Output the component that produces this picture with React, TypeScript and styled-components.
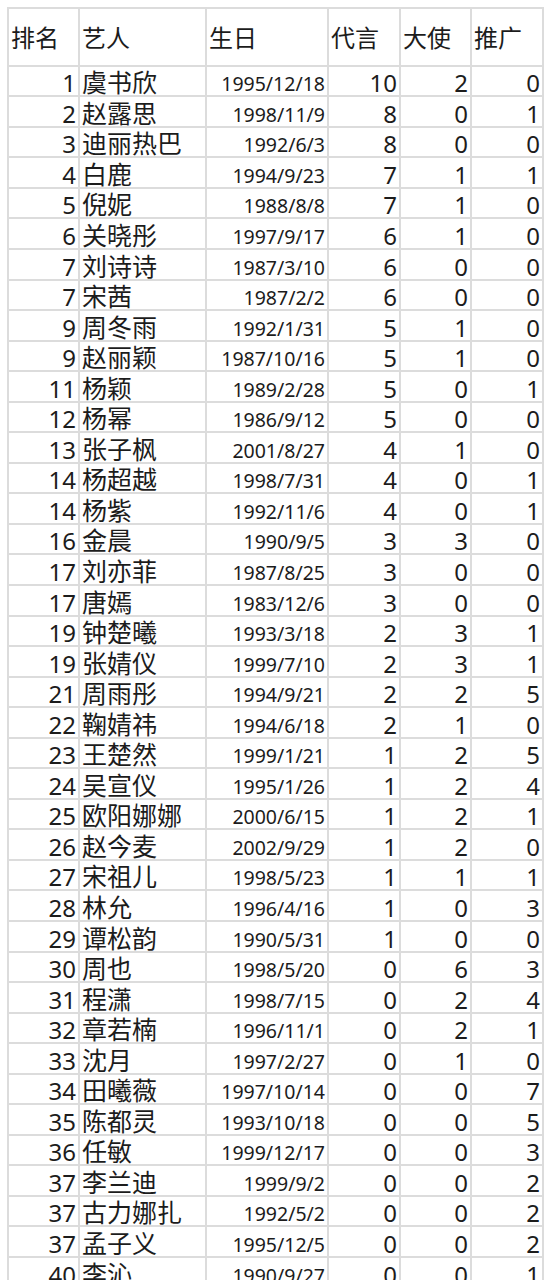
import styled, { createGlobalStyle } from 'styled-components';

type Row = [string, string, string, number, number, number];

const rows: Row[] = [
  ['1', '虞书欣', '1995/12/18', 10, 2, 0],
  ['2', '赵露思', '1998/11/9', 8, 0, 1],
  ['3', '迪丽热巴', '1992/6/3', 8, 0, 0],
  ['4', '白鹿', '1994/9/23', 7, 1, 1],
  ['5', '倪妮', '1988/8/8', 7, 1, 0],
  ['6', '关晓彤', '1997/9/17', 6, 1, 0],
  ['7', '刘诗诗', '1987/3/10', 6, 0, 0],
  ['7', '宋茜', '1987/2/2', 6, 0, 0],
  ['9', '周冬雨', '1992/1/31', 5, 1, 0],
  ['9', '赵丽颖', '1987/10/16', 5, 1, 0],
  ['11', '杨颖', '1989/2/28', 5, 0, 1],
  ['12', '杨幂', '1986/9/12', 5, 0, 0],
  ['13', '张子枫', '2001/8/27', 4, 1, 0],
  ['14', '杨超越', '1998/7/31', 4, 0, 1],
  ['14', '杨紫', '1992/11/6', 4, 0, 1],
  ['16', '金晨', '1990/9/5', 3, 3, 0],
  ['17', '刘亦菲', '1987/8/25', 3, 0, 0],
  ['17', '唐嫣', '1983/12/6', 3, 0, 0],
  ['19', '钟楚曦', '1993/3/18', 2, 3, 1],
  ['19', '张婧仪', '1999/7/10', 2, 3, 1],
  ['21', '周雨彤', '1994/9/21', 2, 2, 5],
  ['22', '鞠婧祎', '1994/6/18', 2, 1, 0],
  ['23', '王楚然', '1999/1/21', 1, 2, 5],
  ['24', '吴宣仪', '1995/1/26', 1, 2, 4],
  ['25', '欧阳娜娜', '2000/6/15', 1, 2, 1],
  ['26', '赵今麦', '2002/9/29', 1, 2, 0],
  ['27', '宋祖儿', '1998/5/23', 1, 1, 1],
  ['28', '林允', '1996/4/16', 1, 0, 3],
  ['29', '谭松韵', '1990/5/31', 1, 0, 0],
  ['30', '周也', '1998/5/20', 0, 6, 3],
  ['31', '程潇', '1998/7/15', 0, 2, 4],
  ['32', '章若楠', '1996/11/1', 0, 2, 1],
  ['33', '沈月', '1997/2/27', 0, 1, 0],
  ['34', '田曦薇', '1997/10/14', 0, 0, 7],
  ['35', '陈都灵', '1993/10/18', 0, 0, 5],
  ['36', '任敏', '1999/12/17', 0, 0, 3],
  ['37', '李兰迪', '1999/9/2', 0, 0, 2],
  ['37', '古力娜扎', '1992/5/2', 0, 0, 2],
  ['37', '孟子义', '1995/12/5', 0, 0, 2],
  ['40', '李沁', '1990/9/27', 0, 0, 1],
];

const headers = ['排名', '艺人', '生日', '代言', '大使', '推广'];

const GlobalStyle = createGlobalStyle`
  html, body {
    margin: 0;
    padding: 0;
    background: #ffffff;
  }
  body {
    font-family: "Noto Sans", "Noto Sans CJK SC", sans-serif;
    color: #1c1c1c;
    height: 1280px;
    overflow: hidden;
  }
`;

const Page = styled.div`
  padding: 7px 0 0 7px;
`;

const Sheet = styled.div`
  display: grid;
  grid-template-columns: 71px 127px 122px 72px 71px 72px;
  grid-template-rows: 57.7px;
  grid-auto-rows: 30.55px;
  width: max-content;
  border-left: 2px solid #dcdcdc;
  border-top: 2px solid #dcdcdc;
`;

const BaseCell = styled.div`
  box-sizing: border-box;
  display: flex;
  align-items: flex-end;
  border-right: 2px solid #dcdcdc;
  border-bottom: 2px solid #dcdcdc;
  line-height: 1;
  white-space: nowrap;
`;

const HeadCell = styled(BaseCell)`
  font-size: 24px;
  padding: 0 0 15px 2px;
`;

type Kind = 'rank' | 'name' | 'date' | 'count';

const sizes: Record<Kind, string> = {
  rank: '24px',
  name: '25px',
  date: '19.5px',
  count: '24px',
};

const pads: Record<Kind, string> = {
  rank: '0 2px 0 0',
  name: '0 0 0 2px',
  date: '0 2px 1.5px 0',
  count: '0 2px 0 0',
};

const Cell = styled(BaseCell)<{ $kind: Kind }>`
  font-size: ${({ $kind }) => sizes[$kind]};
  justify-content: ${({ $kind }) => ($kind === 'name' ? 'flex-start' : 'flex-end')};
  padding: ${({ $kind }) => pads[$kind]};
`;

export default function App() {
  return (
    <>
      <GlobalStyle />
      <Page>
        <Sheet>
          {headers.map((h) => (
            <HeadCell key={h}>{h}</HeadCell>
          ))}
          {rows.map(([rank, name, date, a, b, c]) => (
            <Row key={name} rank={rank} name={name} date={date} a={a} b={b} c={c} />
          ))}
        </Sheet>
      </Page>
    </>
  );
}

function Row(props: { rank: string; name: string; date: string; a: number; b: number; c: number }) {
  return (
    <>
      <Cell $kind="rank">{props.rank}</Cell>
      <Cell $kind="name">{props.name}</Cell>
      <Cell $kind="date">{props.date}</Cell>
      <Cell $kind="count">{props.a}</Cell>
      <Cell $kind="count">{props.b}</Cell>
      <Cell $kind="count">{props.c}</Cell>
    </>
  );
}
